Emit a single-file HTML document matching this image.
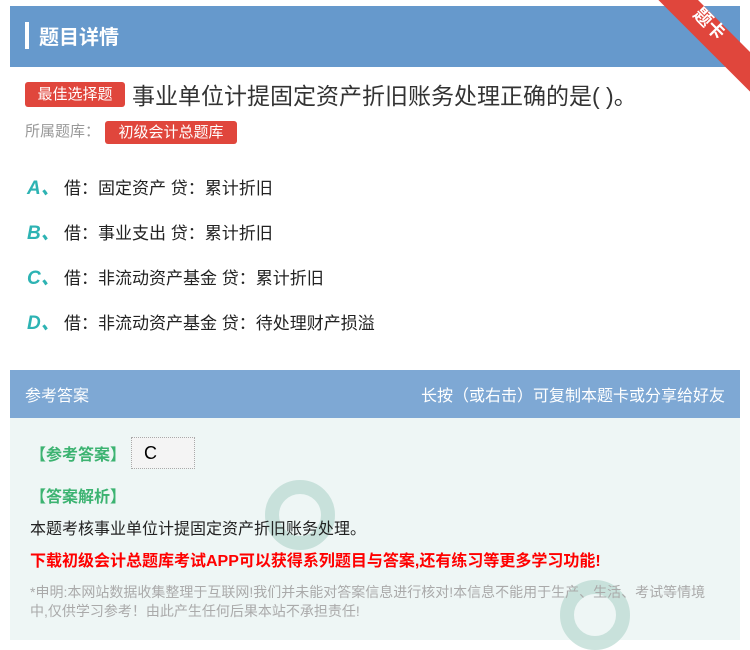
<!DOCTYPE html>
<html><head><meta charset="utf-8"><style>
*{margin:0;padding:0;box-sizing:border-box}
body{width:750px;height:640px;background:#fff;font-family:"Liberation Sans","Noto Sans CJK SC",sans-serif;position:relative;overflow:hidden}
.a{position:absolute;white-space:nowrap}
.tag{background:#e0463c;color:#fff;border-radius:3px;font-size:15px;text-align:center}
.opt{font-size:17px;color:#222}
.opt b{color:#2db3b3;font-style:italic;font-size:19px;display:inline-block;width:37px}
</style></head><body>
<div class="a" style="left:10px;top:6px;width:730px;height:61px;background:#6699cc"></div>
<div class="a" style="left:25px;top:22px;width:4px;height:27px;background:#fff"></div>
<div class="a" style="left:39px;top:21px;color:#fff;font-size:20px;font-weight:bold">题目详情</div>
<div class="a" style="width:140px;height:28px;background:#e0463c;transform:rotate(45deg);transform-origin:0 0;left:678px;top:-20px"></div>
<div class="a" style="left:692px;top:10px;color:#fff;font-size:18px;font-weight:bold;transform:rotate(45deg)">题卡</div>
<div class="a tag" style="left:25px;top:82px;width:100px;height:25px;line-height:25px">最佳选择题</div>
<div class="a" style="left:132px;top:77px;font-size:23px;color:#333">事业单位计提固定资产折旧账务处理正确的是( )。</div>
<div class="a" style="left:25px;top:120px;font-size:15px;color:#999;line-height:23px">所属题库：</div>
<div class="a tag" style="left:105px;top:121px;width:132px;height:23px;line-height:23px;font-size:15px">初级会计总题库</div>
<div class="a opt" style="left:27px;top:173px"><b>A、</b>借：固定资产 贷：累计折旧</div>
<div class="a opt" style="left:27px;top:218px"><b>B、</b>借：事业支出 贷：累计折旧</div>
<div class="a opt" style="left:27px;top:263px"><b>C、</b>借：非流动资产基金 贷：累计折旧</div>
<div class="a opt" style="left:27px;top:308px"><b>D、</b>借：非流动资产基金 贷：待处理财产损溢</div>
<div class="a" style="left:10px;top:370px;width:730px;height:48px;background:#7ea8d4"></div>
<div class="a" style="left:25px;top:382px;color:#fff;font-size:16px">参考答案</div>
<div class="a" style="right:25px;top:382px;color:#fff;font-size:16px">长按（或右击）可复制本题卡或分享给好友</div>
<div class="a" style="left:10px;top:418px;width:730px;height:222px;background:#eef6f5"></div>
<div class="a" style="left:265px;top:480px;width:70px;height:70px;border-radius:50%;border:14px solid #b8d8d0;opacity:.7"></div>
<div class="a" style="left:560px;top:580px;width:70px;height:70px;border-radius:50%;border:14px solid #b8d8d0;opacity:.7"></div>
<div class="a" style="left:30px;top:441px;color:#3cb371;font-size:16px;font-weight:bold">【参考答案】</div>
<div class="a" style="left:131px;top:437px;width:64px;height:32px;background:#f4f4f4;border:1px dotted #aaa;font-size:18px;padding-left:12px;line-height:30px">C</div>
<div class="a" style="left:30px;top:483px;color:#3cb371;font-size:16px;font-weight:bold">【答案解析】</div>
<div class="a" style="left:30px;top:515px;color:#222;font-size:16px">本题考核事业单位计提固定资产折旧账务处理。</div>
<div class="a" style="left:30px;top:547px;color:#f00;font-size:16px;font-weight:bold">下载初级会计总题库考试APP可以获得系列题目与答案,还有练习等更多学习功能!</div>
<div class="a" style="left:30px;top:583px;color:#aaa;font-size:14px;line-height:19px;white-space:normal;width:690px">*申明:本网站数据收集整理于互联网!我们并未能对答案信息进行核对!本信息不能用于生产、生活、考试等情境中,仅供学习参考！由此产生任何后果本站不承担责任!</div>
</body></html>
